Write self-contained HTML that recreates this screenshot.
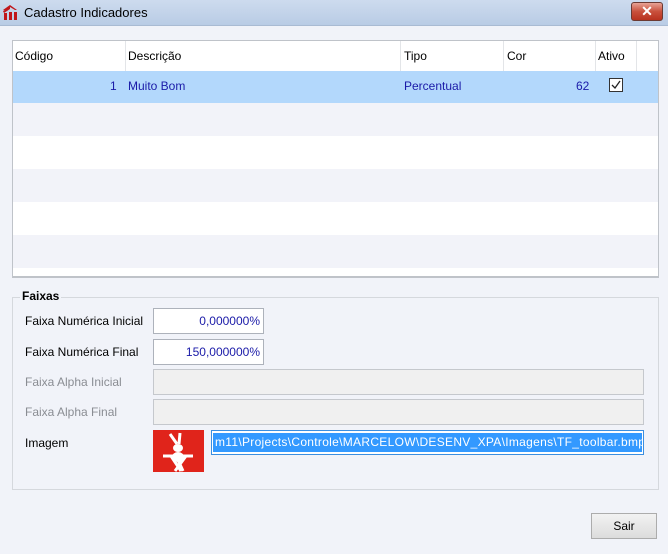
<!DOCTYPE html>
<html><head><meta charset="utf-8"><style>
*{margin:0;padding:0;box-sizing:border-box}
body{width:668px;height:554px;overflow:hidden;background:#f1f3f9;font-family:"Liberation Sans",sans-serif;font-size:12px;position:relative;color:#000}
.a{position:absolute}
.title{left:0;top:0;width:668px;height:26px;background:linear-gradient(#cddbee,#b9cce5);border-bottom:1px solid #a9bbd3}
.hdr{top:41px;height:30px;line-height:30px;font-size:12px}
.inp{background:#fff;border:1px solid #adb2bb;color:#1a1aa8;text-align:right;padding-right:3px;line-height:24px;font-size:12px}
.dis{background:#f0f0f0;border:1px solid #c5c8cd}
.lbl{font-size:12px}
.gl{color:#8a8d93}
</style></head><body>
<div class="a title"></div>
<svg class="a" style="left:2px;top:4px" width="16" height="17" viewBox="0 0 16 17"><path d="M1 6 L8 1 L15 6 L13 6 L8 3 L3 6Z M1 7 L8 3 L8 5 L2 9Z" fill="#c0161b"/><rect x="2" y="9" width="3" height="7" fill="#c0161b"/><rect x="7" y="8" width="3" height="8" fill="#c0161b"/><rect x="12" y="8" width="3" height="8" fill="#c0161b"/></svg>
<div class="a" style="left:24px;top:5px;font-size:13px">Cadastro Indicadores</div>
<div class="a" style="left:631px;top:2px;width:32px;height:19px;border:1px solid #6b3a33;border-radius:3px;background:linear-gradient(#e7a395,#c9503c 50%,#b8321f);color:#fff;text-align:center;font-weight:bold;font-size:14px;line-height:17px">✕</div>

<div class="a" style="left:12px;top:40px;width:647px;height:238px;background:#fff;border:1px solid #bfc3c9;border-bottom:2px solid #bfc3c9"></div>
<div class="a" style="left:13px;top:41px;width:645px;height:30px;background:#fff"></div>
<div class="a" style="left:125px;top:41px;width:1px;height:30px;background:#e3e5e8"></div>
<div class="a" style="left:400px;top:41px;width:1px;height:30px;background:#e3e5e8"></div>
<div class="a" style="left:503px;top:41px;width:1px;height:30px;background:#e3e5e8"></div>
<div class="a" style="left:595px;top:41px;width:1px;height:30px;background:#e3e5e8"></div>
<div class="a" style="left:636px;top:41px;width:1px;height:30px;background:#e3e5e8"></div>
<div class="a hdr" style="left:15px">Código</div>
<div class="a hdr" style="left:128px">Descrição</div>
<div class="a hdr" style="left:404px">Tipo</div>
<div class="a hdr" style="left:507px">Cor</div>
<div class="a hdr" style="left:598px">Ativo</div>
<div class="a" style="left:13px;top:71px;width:645px;height:32px;background:#b3d8fc"></div>
<div class="a" style="left:13px;top:103px;width:645px;height:33px;background:#f2f3f9"></div>
<div class="a" style="left:13px;top:169px;width:645px;height:33px;background:#f2f3f9"></div>
<div class="a" style="left:13px;top:235px;width:645px;height:33px;background:#f2f3f9"></div>
<div class="a" style="left:110px;top:79px;color:#1a1aa8">1</div>
<div class="a" style="left:128px;top:79px;color:#1a1aa8">Muito Bom</div>
<div class="a" style="left:404px;top:79px;color:#1a1aa8">Percentual</div>
<div class="a" style="left:576px;top:79px;color:#1a1aa8">62</div>
<div class="a" style="left:609px;top:78px;width:14px;height:14px;border:1px solid #333;background:#fff"></div>
<svg class="a" style="left:610px;top:79px" width="12" height="12"><path d="M2 6 L5 9 L10 2" stroke="#222" stroke-width="1.3" fill="none"/></svg>

<div class="a" style="left:12px;top:297px;width:647px;height:193px;border:1px solid #d5d8dd"></div>
<div class="a" style="left:20px;top:289px;padding:0 2px;background:#f1f3f9;font-weight:bold;font-size:12px">Faixas</div>
<div class="a lbl" style="left:25px;top:314px">Faixa Numérica Inicial</div>
<div class="a inp" style="left:153px;top:308px;width:111px;height:26px">0,000000%</div>
<div class="a lbl" style="left:25px;top:345px">Faixa Numérica Final</div>
<div class="a inp" style="left:153px;top:339px;width:111px;height:26px">150,000000%</div>
<div class="a lbl gl" style="left:25px;top:375px">Faixa Alpha Inicial</div>
<div class="a dis" style="left:153px;top:369px;width:491px;height:26px"></div>
<div class="a lbl gl" style="left:25px;top:405px">Faixa Alpha Final</div>
<div class="a dis" style="left:153px;top:399px;width:491px;height:26px"></div>
<div class="a lbl" style="left:25px;top:436px">Imagem</div>
<svg class="a" style="left:153px;top:430px" width="51" height="42" viewBox="0 0 51 42"><rect width="51" height="42" fill="#e0241b"/><path d="M17 4 L24 14 M27 3 L26 14" stroke="#fff" stroke-width="3"/><ellipse cx="25" cy="18" rx="5" ry="4" fill="#fff"/><ellipse cx="25" cy="27" rx="6" ry="5" fill="#fff"/><path d="M10 26 L40 26 M18 26 L28 41 M33 26 L22 41 M25 30 L30 41" stroke="#fff" stroke-width="3"/></svg>
<div class="a" style="left:211px;top:430px;width:433px;height:25px;border:1px solid #3b8ee0;background:#fff"></div>
<div class="a" style="left:213px;top:433px;width:429px;height:19px;background:#3399ff;color:#fff;line-height:19px;font-size:12px;letter-spacing:0.3px;white-space:nowrap;overflow:hidden;padding-left:2px">m11\Projects\Controle\MARCELOW\DESENV_XPA\Imagens\TF_toolbar.bmp</div>

<div class="a" style="left:591px;top:513px;width:66px;height:26px;border:1px solid #acacac;background:linear-gradient(#f2f2f2,#dcdcdc);text-align:center;line-height:24px">Sair</div>
</body></html>
